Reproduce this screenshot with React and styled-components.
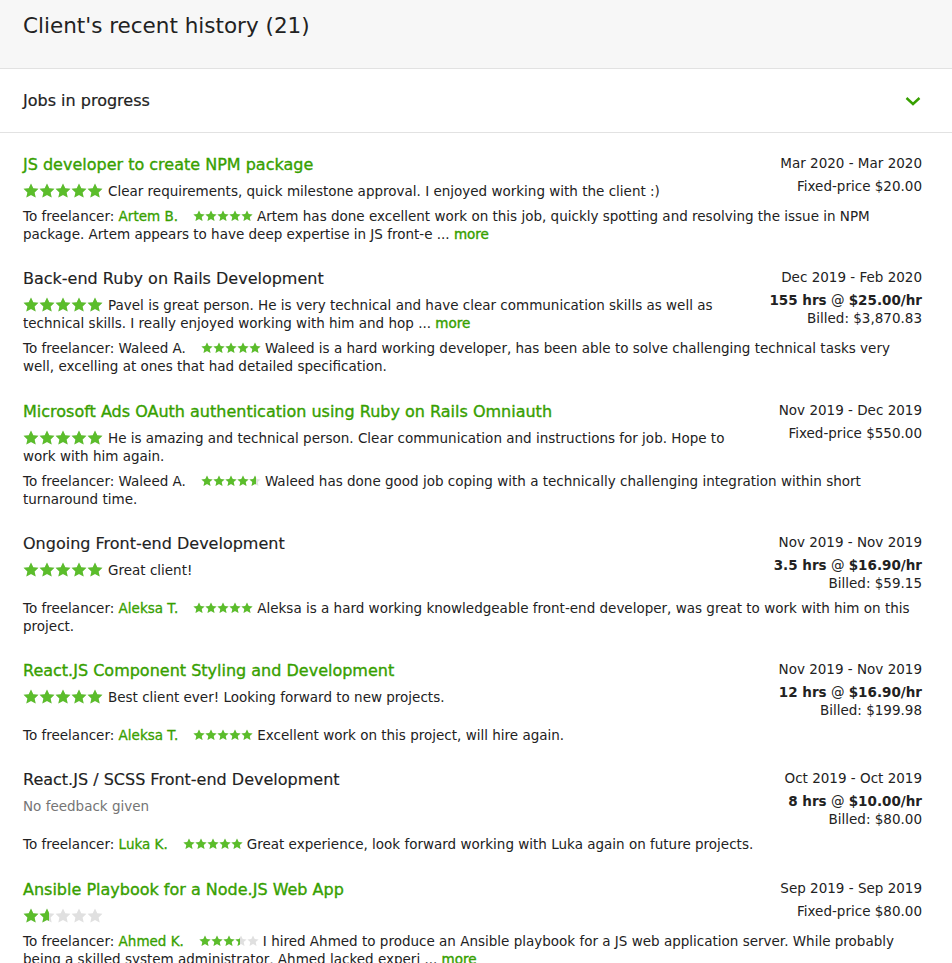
import React from 'react'
import styled, { createGlobalStyle } from 'styled-components'

const GlobalStyle = createGlobalStyle`
  body {
    margin: 0;
    background: #fff;
    font-family: "DejaVu Sans", "Liberation Sans", sans-serif;
    color: #222;
  }
`

const GREEN = '#37a000'
const STAR_GREEN = '#5bbd2b'
const STAR_PATH = 'M12 0.8l3.4 7.1 7.8.9-5.8 5.3 1.6 7.7L12 17.9l-7 3.9 1.6-7.7L0.8 8.8l7.8-.9z'

const Page = styled.div`
  width: 952px;
`
const Header = styled.header`
  height: 69px;
  background: #f7f7f7;
  border-bottom: 1px solid #e2e2e2;
  padding: 12px 30px 0 23px;
  box-sizing: border-box;
`
const Heading = styled.h2`
  margin: 0;
  font-size: 21.5px;
  line-height: 28px;
  font-weight: normal;
  color: #222;
`
const Section = styled.div`
  height: 63px;
  border-bottom: 1px solid #e2e2e2;
  padding: 0 31px 0 23px;
  display: flex;
  align-items: center;
  justify-content: space-between;
`
const SectionTitle = styled.span`
  font-size: 16px;
  -webkit-text-stroke: 0.2px #222;
`
const List = styled.div`
  padding: 21px 30px 0 23px;
  display: flex;
  flex-direction: column;
  gap: 25.25px;
`
const Item = styled.div`
  display: flex;
  flex-direction: column;
  gap: 7px;
`
const TopRow = styled.div`
  display: flex;
  justify-content: space-between;
  align-items: flex-start;
`
const Left = styled.div`
  flex: 1;
  min-width: 0;
`
const Right = styled.div`
  flex: 0 0 150px;
  margin-left: 22px;
  text-align: right;
  font-size: 13.5px;
  line-height: 18px;
  white-space: nowrap;
`
const Title = styled.div`
  font-size: 16px;
  line-height: 22px;
  color: ${p => (p.$link ? GREEN : '#222')};
  -webkit-text-stroke: ${p => (p.$link ? `0.35px ${GREEN}` : '0.15px #222')};
`
const Feedback = styled.div`
  margin-top: 6px;
  font-size: 13.5px;
  line-height: 18px;
  color: ${p => (p.$muted ? '#757575' : '#222')};
`
const Price = styled.div`
  margin-top: 5px;
`
const Strong = styled.span`
  font-weight: bold;
`
const Line = styled.div`
  font-size: 13.5px;
  line-height: 18px;
  color: #222;
`
const Name = styled.span`
  color: ${p => (p.$link ? GREEN : '#222')};
  -webkit-text-stroke: ${p => (p.$link ? `0.3px ${GREEN}` : '0')};
  margin-right: 15px;
`
const More = styled.span`
  color: ${GREEN};
  -webkit-text-stroke: 0.4px ${GREEN};
`
const StarsWrap = styled.span`
  position: relative;
  display: inline-block;
  width: ${p => p.$size * 5}px;
  height: ${p => p.$size}px;
  vertical-align: ${p => (p.$size > 14 ? '-3px' : '-1px')};
  margin-right: ${p => (p.$size > 14 ? 5 : 4)}px;
  line-height: 0;
`
const StarLayer = styled.span`
  position: absolute;
  left: 0;
  top: 0;
  height: 100%;
  overflow: hidden;
  color: ${p => p.$color};
  svg {
    display: block;
  }
`

function StarRow({ size }) {
  return (
    <svg width={size * 5} height={size} viewBox="0 0 120 24" fill="currentColor">
      {[0, 1, 2, 3, 4].map(i => (
        <path key={i} transform={`translate(${i * 24} 0)`} d={STAR_PATH} />
      ))}
    </svg>
  )
}

function Stars({ rating, size }) {
  return (
    <StarsWrap $size={size}>
      <StarLayer $color="#e0e0e0" style={{ width: '100%' }}>
        <StarRow size={size} />
      </StarLayer>
      <StarLayer $color={STAR_GREEN} style={{ width: `${(rating / 5) * 100}%` }}>
        <StarRow size={size} />
      </StarLayer>
    </StarsWrap>
  )
}

const jobs = [
  {
    title: 'JS developer to create NPM package',
    link: true,
    dates: 'Mar 2020 - Mar 2020',
    fixed: '$20.00',
    rating: 5,
    feedback: 'Clear requirements, quick milestone approval. I enjoyed working with the client :)',
    freelancer: 'Artem B.',
    freelancerLink: true,
    fRating: 5,
    fFeedback:
      'Artem has done excellent work on this job, quickly spotting and resolving the issue in NPM package. Artem appears to have deep expertise in JS front-e ...',
    more: true,
  },
  {
    title: 'Back-end Ruby on Rails Development',
    dates: 'Dec 2019 - Feb 2020',
    hours: '155 hrs',
    rate: '$25.00/hr',
    billed: '$3,870.83',
    rating: 5,
    feedback:
      'Pavel is great person. He is very technical and have clear communication skills as well as technical skills. I really enjoyed working with him and hop ...',
    feedbackMore: true,
    freelancer: 'Waleed A.',
    fRating: 5,
    fFeedback:
      'Waleed is a hard working developer, has been able to solve challenging technical tasks very well, excelling at ones that had detailed specification.',
  },
  {
    title: 'Microsoft Ads OAuth authentication using Ruby on Rails Omniauth',
    link: true,
    dates: 'Nov 2019 - Dec 2019',
    fixed: '$550.00',
    rating: 5,
    feedback:
      'He is amazing and technical person. Clear communication and instructions for job. Hope to work with him again.',
    freelancer: 'Waleed A.',
    fRating: 4.6,
    fFeedback:
      'Waleed has done good job coping with a technically challenging integration within short turnaround time.',
  },
  {
    title: 'Ongoing Front-end Development',
    dates: 'Nov 2019 - Nov 2019',
    hours: '3.5 hrs',
    rate: '$16.90/hr',
    billed: '$59.15',
    rating: 5,
    feedback: 'Great client!',
    freelancer: 'Aleksa T.',
    freelancerLink: true,
    fRating: 5,
    fFeedback:
      'Aleksa is a hard working knowledgeable front-end developer, was great to work with him on this project.',
  },
  {
    title: 'React.JS Component Styling and Development',
    link: true,
    dates: 'Nov 2019 - Nov 2019',
    hours: '12 hrs',
    rate: '$16.90/hr',
    billed: '$199.98',
    rating: 5,
    feedback: 'Best client ever! Looking forward to new projects.',
    freelancer: 'Aleksa T.',
    freelancerLink: true,
    fRating: 5,
    fFeedback: 'Excellent work on this project, will hire again.',
  },
  {
    title: 'React.JS / SCSS Front-end Development',
    dates: 'Oct 2019 - Oct 2019',
    hours: '8 hrs',
    rate: '$10.00/hr',
    billed: '$80.00',
    noFeedback: true,
    freelancer: 'Luka K.',
    freelancerLink: true,
    fRating: 5,
    fFeedback: 'Great experience, look forward working with Luka again on future projects.',
  },
  {
    title: 'Ansible Playbook for a Node.JS Web App',
    link: true,
    dates: 'Sep 2019 - Sep 2019',
    fixed: '$80.00',
    rating: 1.6,
    feedback: '',
    freelancer: 'Ahmed K.',
    freelancerLink: true,
    fRating: 3.4,
    fFeedback:
      'I hired Ahmed to produce an Ansible playbook for a JS web application server. While probably being a skilled system administrator, Ahmed lacked experi ...',
    more: true,
  },
]

function JobItem({ job }) {
  return (
    <Item>
      <TopRow>
        <Left>
          <Title $link={job.link}>{job.title}</Title>
          {job.noFeedback ? (
            <Feedback $muted>No feedback given</Feedback>
          ) : (
            <Feedback>
              <Stars rating={job.rating} size={16} />
              {job.feedback}
              {job.feedbackMore && <More> more</More>}
            </Feedback>
          )}
        </Left>
        <Right>
          <div>{job.dates}</div>
          {job.fixed ? (
            <Price>Fixed-price {job.fixed}</Price>
          ) : (
            <>
              <Price>
                <Strong>{job.hours}</Strong> @ <Strong>{job.rate}</Strong>
              </Price>
              <div>Billed: {job.billed}</div>
            </>
          )}
        </Right>
      </TopRow>
      <Line>
        To freelancer: <Name $link={job.freelancerLink}>{job.freelancer}</Name>
        <Stars rating={job.fRating} size={12} />
        {job.fFeedback}
        {job.more && <More> more</More>}
      </Line>
    </Item>
  )
}

export default function App() {
  return (
    <Page>
      <GlobalStyle />
      <Header>
        <Heading>Client's recent history (21)</Heading>
      </Header>
      <Section>
        <SectionTitle>Jobs in progress</SectionTitle>
        <svg width="16" height="10" viewBox="0 0 16 10" fill="none">
          <polyline points="1.5,2 8,8 14.5,2" stroke={GREEN} strokeWidth="2.4" />
        </svg>
      </Section>
      <List>
        {jobs.map(job => (
          <JobItem key={job.title} job={job} />
        ))}
      </List>
    </Page>
  )
}
